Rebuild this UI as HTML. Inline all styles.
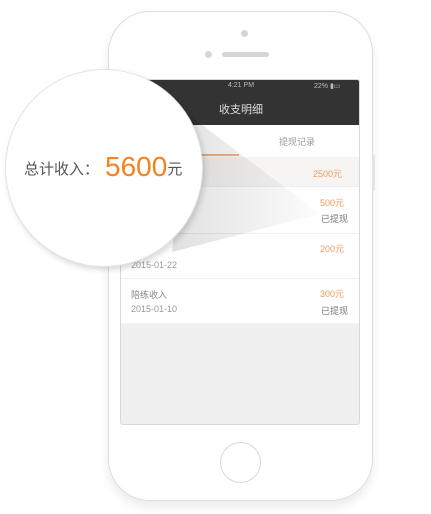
<!DOCTYPE html>
<html><head><meta charset="utf-8"><style>
*{margin:0;padding:0;box-sizing:border-box}
body{width:431px;height:514px;background:#fff;position:relative;overflow:hidden;font-family:"Liberation Sans","Noto Sans CJK SC",sans-serif}
.a{position:absolute}
.phone{left:108px;top:11px;width:265px;height:490px;border:1px solid #ddd;border-radius:42px;background:#fff;box-shadow:0 6px 10px rgba(0,0,0,.08)}
.screen{left:120px;top:79px;width:240px;height:346px;background:#f0f0f0;border:1px solid #d8d8d8;border-radius:3px;overflow:hidden}
.t{font-size:9px;color:#999}
.o{font-size:9px;color:#f39a5c}
</style></head><body>
<div class="a phone"></div>
<div class="a" style="left:372px;top:155px;width:3px;height:36px;background:#e5e5e5;border-radius:2px"></div>
<div class="a" style="left:241px;top:30px;width:7px;height:7px;border-radius:50%;background:#d6d6d6"></div>
<div class="a" style="left:205px;top:51px;width:7px;height:7px;border-radius:50%;background:#d6d6d6"></div>
<div class="a" style="left:222px;top:52px;width:47px;height:5px;border-radius:3px;background:#d6d6d6"></div>
<div class="a" style="left:220px;top:442px;width:41px;height:41px;border-radius:50%;border:1.5px solid #d8d8d8"></div>
<div class="a screen">
  <div class="a" style="left:0;top:0;width:240px;height:45px;background:#333"></div>
  <div class="a" style="left:0;top:2px;width:240px;text-align:center;font-size:7px;color:#bbb">4:21 PM</div>
  <div class="a" style="left:193px;top:2px;font-size:7px;color:#bbb">22% ▮▭</div>
  <div class="a" style="left:0;top:21px;width:240px;text-align:center;font-size:11px;color:#ddd">收支明细</div>
  <div class="a" style="left:0;top:45px;width:240px;height:32px;background:#fff"></div>
  <div class="a t" style="left:158px;top:55px">提现记录</div>
  <div class="a" style="left:60px;top:74px;width:58px;height:1.5px;background:#f0b48a"></div>
  <div class="a" style="left:0;top:77px;width:240px;height:29px;background:#f7f5f3"></div>
  <div class="a o" style="left:192px;top:87px">2500元</div>
  <div class="a" style="left:0;top:106px;width:240px;height:47px;background:#fff;border-top:1px solid #eee"></div>
  <div class="a o" style="left:199px;top:116px">500元</div>
  <div class="a t" style="left:200px;top:132px;color:#777">已提现</div>
  <div class="a" style="left:0;top:153px;width:240px;height:45px;background:#fff;border-top:1px solid #eee"></div>
  <div class="a o" style="left:199px;top:162px">200元</div>
  <div class="a t" style="left:10px;top:180px">2015-01-22</div>
  <div class="a" style="left:0;top:198px;width:240px;height:45px;background:#fff;border-top:1px solid #eee"></div>
  <div class="a t" style="left:10px;top:208px;color:#888">陪练收入</div>
  <div class="a o" style="left:199px;top:207px">300元</div>
  <div class="a t" style="left:10px;top:224px">2015-01-10</div>
  <div class="a t" style="left:200px;top:224px;color:#777">已提现</div>
</div>
<svg class="a" style="left:0;top:0" width="431" height="514">
<defs><linearGradient id="g" x1="0" x2="1" y1="0" y2="0"><stop offset="0" stop-color="#000" stop-opacity=".12"/><stop offset="1" stop-color="#000" stop-opacity=".01"/></linearGradient></defs>
<polygon points="185,112 320,214 172,252" fill="url(#g)"/>
</svg>
<div class="a" style="left:5px;top:69px;width:198px;height:198px;border-radius:50%;background:#fff;border:1px solid #e4e4e4;box-shadow:2px 3px 6px rgba(0,0,0,.15)"></div>
<div class="a" style="left:24px;top:151px;font-size:15px;color:#555;white-space:nowrap;line-height:32px">总计收入：<span style="font-size:28px;color:#f58220;vertical-align:-2px;margin-left:6px">5600</span>元</div>
</body></html>
